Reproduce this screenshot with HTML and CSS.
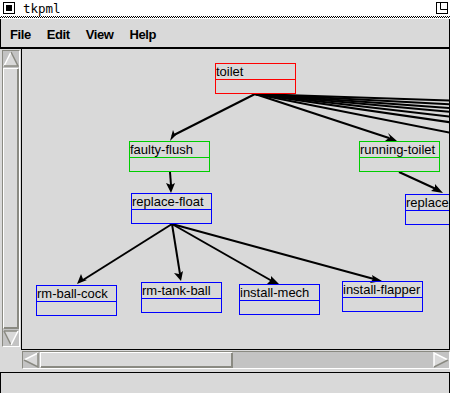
FILE: index.html
```html
<!DOCTYPE html>
<html lang="en">
<head>
  <meta charset="UTF-8" />
  <title>tkpml</title>
  <link rel="stylesheet" href="styles.css">
</head>
<body>
  <div class="titlebar">
    <svg class="win-icon" width="12" height="12" viewBox="0 0 12 12">
      <rect x="0.5" y="0.5" width="11" height="11" fill="#fff" stroke="#000"/>
      <rect x="3" y="3" width="6" height="6" fill="#000"/>
    </svg>
    <span class="title">tkpml</span>
    <svg class="win-icon max" width="12" height="12" viewBox="0 0 12 12">
      <rect x="0.5" y="0.5" width="11" height="11" fill="#fff" stroke="#000"/>
      <path d="M1 11.5 H11.5 M0.5 1 V11" stroke="#000" fill="none"/>
      <path d="M4.5 1 V7.5 H11" stroke="#000" fill="none"/>
    </svg>
  </div>
  <div class="title-rule"></div>

  <div class="menubar">
    <span class="menu-item">File</span>
    <span class="menu-item">Edit</span>
    <span class="menu-item">View</span>
    <span class="menu-item">Help</span>
  </div>

  <div class="main">
    <div class="vscroll">
      <div class="sb-arrow">
        <svg width="16" height="16" viewBox="0 0 16 16">
          <polygon points="8,1 15,15 1,15" fill="#d9d9d9"/>
          <path d="M1,15 L8,1" stroke="#fff" stroke-width="1.5"/>
          <path d="M8,1 L15,15 L1,15" stroke="#8a8a82" stroke-width="1.5" fill="none"/>
        </svg>
      </div>
      <div class="sb-slider"></div>
      <div class="sb-arrow">
        <svg width="16" height="16" viewBox="0 0 16 16">
          <polygon points="1,1 15,1 8,15" fill="#d9d9d9"/>
          <path d="M1,1 L15,1 M1,1 L8,15" stroke="#8a8a82" stroke-width="1.5" fill="none"/>
          <path d="M15,1 L8,15" stroke="#fff" stroke-width="1.5"/>
        </svg>
      </div>
    </div>

    <div class="canvas">
      <svg class="edges" width="427" height="300" viewBox="0 0 427 300">
        <g stroke="#000" stroke-width="2" fill="none">
          <line x1="233" y1="45" x2="150" y2="87"/>
          <line x1="233" y1="45" x2="367" y2="89"/>
          <line x1="233" y1="45" x2="440" y2="52"/>
          <line x1="233" y1="45" x2="440" y2="56"/>
          <line x1="233" y1="45" x2="440" y2="60"/>
          <line x1="233" y1="45" x2="440" y2="64"/>
          <line x1="233" y1="45" x2="440" y2="69"/>
          <line x1="233" y1="45" x2="440" y2="75"/>
          <line x1="233" y1="45" x2="440" y2="86"/>
          <line x1="148" y1="123" x2="149" y2="136"/>
          <line x1="377" y1="123" x2="414" y2="140"/>
          <line x1="150" y1="175" x2="61" y2="231"/>
          <line x1="150" y1="175" x2="158" y2="225"/>
          <line x1="150" y1="175" x2="250" y2="232"/>
          <line x1="150" y1="175" x2="352" y2="230"/>
        </g>
        <g fill="#000">
          <polygon points="148,92 151,81 153,86 156,84"/>
          <polygon points="375,92 366,84 368,88 363,92"/>
          <polygon points="149,144 144,134 149,136 153,134"/>
          <polygon points="421,144 409,142 413,139 413,135"/>
          <polygon points="55,235 59,225 61,230 65,231"/>
          <polygon points="159,232 152,224 157,225 161,222"/>
          <polygon points="257,235 245,235 249,231 249,227"/>
          <polygon points="360,232 348,234 351,230 350,226"/>
        </g>
      </svg>

      <div class="node node-red n-toilet"><div class="label">toilet</div><div class="body"></div></div>
      <div class="node node-green n-faulty"><div class="label">faulty-flush</div><div class="body"></div></div>
      <div class="node node-green n-running"><div class="label">running-toilet</div><div class="body"></div></div>
      <div class="node node-blue n-float"><div class="label">replace-float</div><div class="body"></div></div>
      <div class="node node-blue n-replace"><div class="label">replace-flapper</div><div class="body"></div></div>
      <div class="node node-blue n-cock"><div class="label">rm-ball-cock</div><div class="body"></div></div>
      <div class="node node-blue n-tank"><div class="label">rm-tank-ball</div><div class="body"></div></div>
      <div class="node node-blue n-mech"><div class="label">install-mech</div><div class="body"></div></div>
      <div class="node node-blue n-flapper"><div class="label">install-flapper</div><div class="body"></div></div>
    </div>
  </div>

  <div class="hrow">
    <div class="hscroll">
      <div class="sb-arrow">
        <svg width="16" height="16" viewBox="0 0 16 16">
          <polygon points="1,8 15,1 15,15" fill="#d9d9d9"/>
          <path d="M1,8 L15,1" stroke="#fff" stroke-width="1.5"/>
          <path d="M15,1 L15,15 L1,8" stroke="#8a8a82" stroke-width="1.5" fill="none"/>
        </svg>
      </div>
      <div class="sb-slider"></div>
      <div class="sb-trough"></div>
      <div class="sb-arrow">
        <svg width="16" height="16" viewBox="0 0 16 16">
          <polygon points="1,1 15,8 1,15" fill="#d9d9d9"/>
          <path d="M1,15 L1,1 L15,8" stroke="#fff" stroke-width="1.5" fill="none"/>
          <path d="M15,8 L1,15" stroke="#8a8a82" stroke-width="1.5"/>
        </svg>
      </div>
    </div>
  </div>

  <div class="status"></div>
</body>
</html>
```

FILE: styles.css
```css
  body {
    margin: 0;
    width: 450px;
    height: 393px;
    overflow: hidden;
    background-color: #d9d9d9;
    font-family: 'Liberation Sans', Arial, sans-serif;
  }

  .titlebar {
    height: 16px;
    background-color: #fff;
    display: flex;
    align-items: center;
    padding: 0 2px 0 3px;
  }

  .win-icon {
    display: block;
  }

  .win-icon.max {
    margin-left: auto;
  }

  .title {
    font-family: 'DejaVu Sans Mono', monospace;
    font-size: 12.5px;
    margin-left: 8px;
    padding-top: 1px;
  }

  .title-rule {
    height: 2px;
    border-bottom: 1px solid #fff;
    background: repeating-conic-gradient(#000 0 25%, #fff 0 50%) 0 0 / 2px 2px;
  }

  .menubar {
    height: 26px;
    padding: 2px 0 0 9px;
    border-left: 1px solid #000;
    border-right: 1px solid #000;
    border-bottom: 2px solid #000;
    display: flex;
    gap: 16px;
  }

  .menu-item {
    font-size: 13px;
    font-weight: bold;
    letter-spacing: -0.4px;
    line-height: 27px;
  }

  .main {
    display: flex;
    height: 301px;
    padding-left: 2px;
    gap: 1px;
  }

  .vscroll {
    width: 16px;
    height: 295px;
    margin-top: 1px;
    border: 1px solid;
    border-color: #8a8a82 #fff #fff #8a8a82;
    background-color: #c3c3c3;
    display: flex;
    flex-direction: column;
  }

  .sb-arrow {
    width: 16px;
    height: 16px;
    flex: none;
  }

  .sb-arrow svg {
    display: block;
  }

  .vscroll .sb-slider {
    flex: 1;
    margin: 1px 0;
  }

  .sb-slider {
    box-sizing: border-box;
    background-color: #d9d9d9;
    border: 1px solid;
    border-color: #fff #8a8a82 #8a8a82 #fff;
    box-shadow: inset -1px -1px 0 #8a8a82;
  }

  .canvas {
    flex: 1;
    position: relative;
    overflow: hidden;
    border: 1px solid #000;
    border-top: none;
    height: 300px;
  }

  .edges {
    position: absolute;
    left: 0;
    top: 0;
  }

  .node {
    position: absolute;
    width: 81px;
    box-sizing: border-box;
    border-width: 1px;
    border-style: solid;
  }

  .node .label {
    height: 15px;
    line-height: 15px;
    border-bottom-width: 1px;
    border-bottom-style: solid;
    font-size: 13px;
    color: #000;
    white-space: nowrap;
  }

  .node .body {
    height: 13px;
  }

  .node-red,
  .node-red .label {
    border-color: #ff0000;
  }

  .node-green,
  .node-green .label {
    border-color: #00cd00;
  }

  .node-blue,
  .node-blue .label {
    border-color: #0000ff;
  }

  .n-toilet { left: 193px; top: 14px; }
  .n-faulty { left: 107px; top: 92px; }
  .n-running { left: 337px; top: 92px; }
  .n-float { left: 109px; top: 144px; }
  .n-replace { left: 383px; top: 145px; }
  .n-cock { left: 14px; top: 236px; }
  .n-tank { left: 119px; top: 233px; }
  .n-mech { left: 217px; top: 235px; }
  .n-flapper { left: 320px; top: 232px; }

  .hrow {
    height: 21px;
    padding-left: 22px;
  }

  .hscroll {
    height: 16px;
    margin-top: 1px;
    border: 1px solid;
    border-color: #8a8a82 #fff #fff #8a8a82;
    background-color: #c3c3c3;
    display: flex;
  }

  .hscroll .sb-slider {
    width: 193px;
    margin: 0 1px;
  }

  .sb-trough {
    flex: 1;
  }

  .status {
    height: 20px;
    border: 1px solid #000;
  }
```
